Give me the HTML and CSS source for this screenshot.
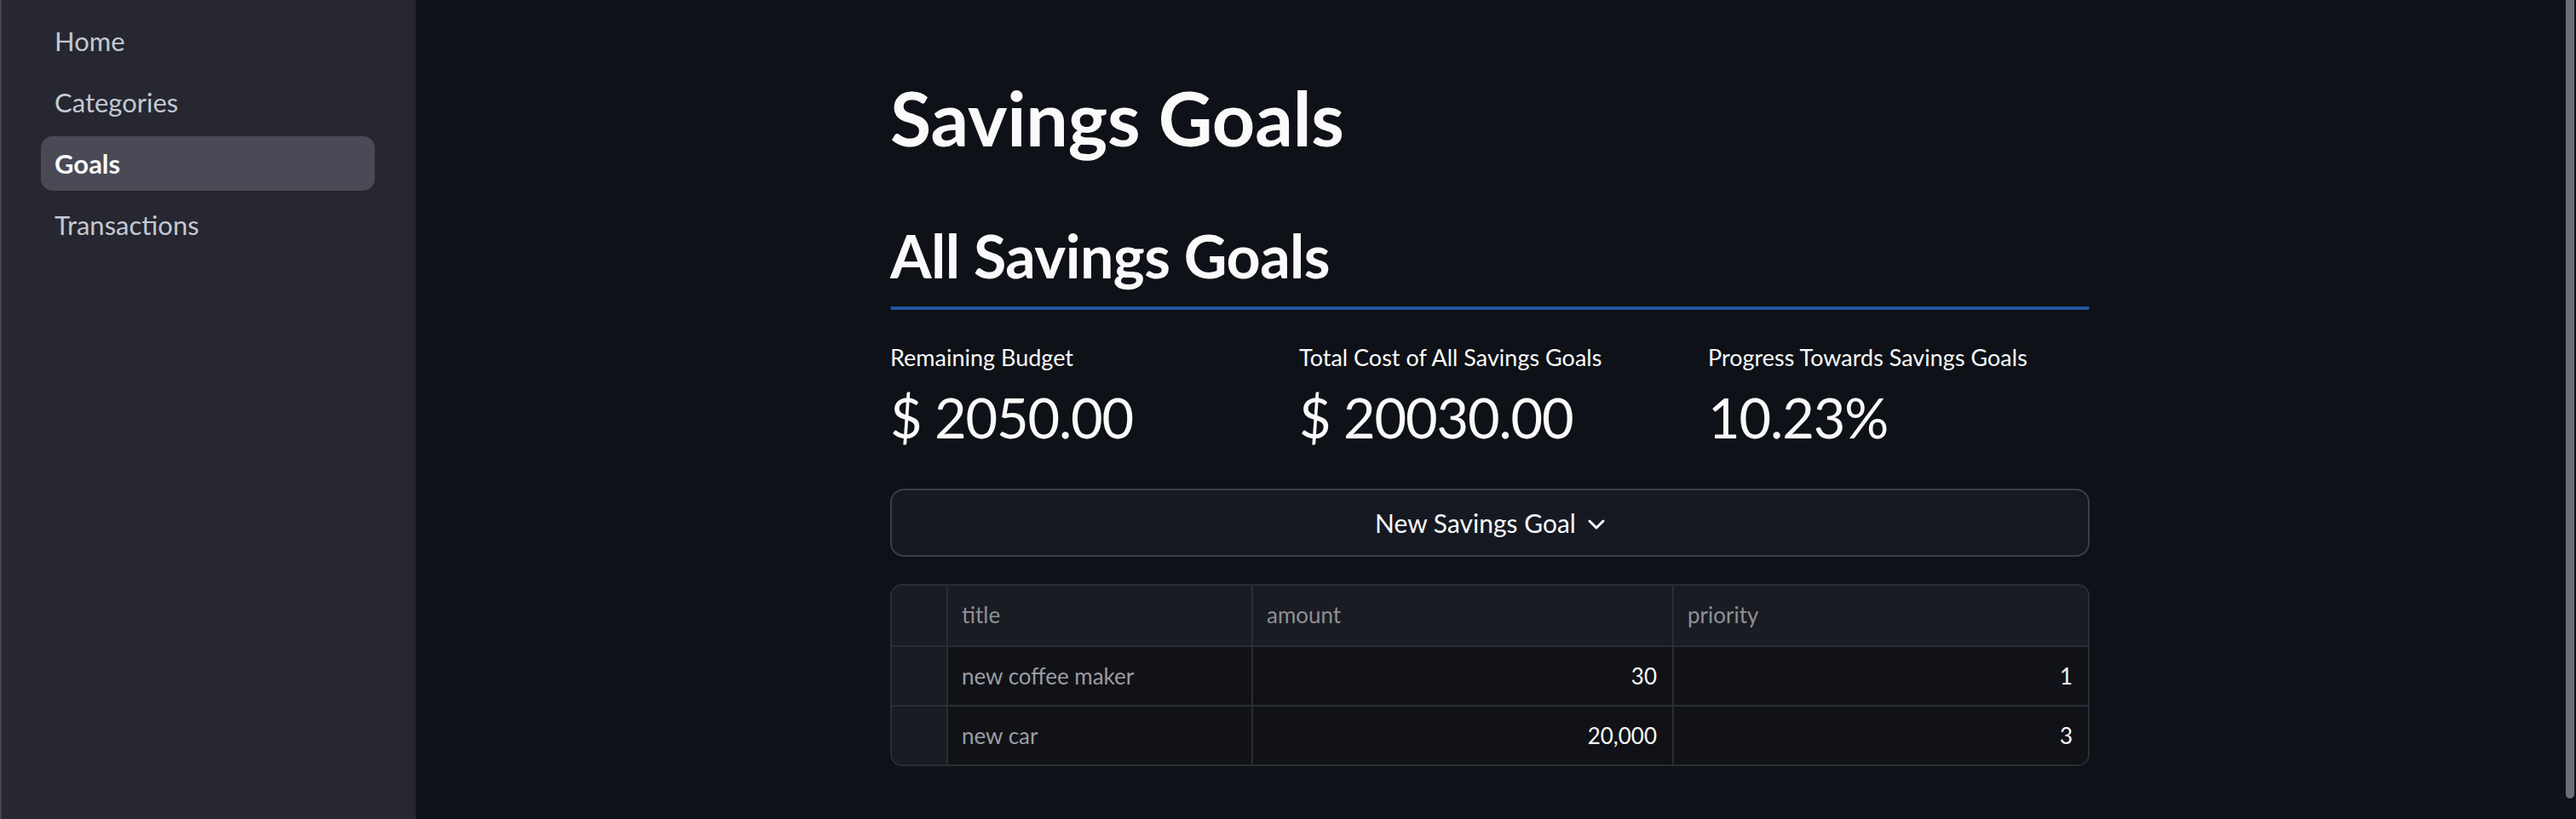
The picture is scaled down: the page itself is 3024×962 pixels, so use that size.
FILE: index.html
```html
<!DOCTYPE html>
<html lang="en">
<head>
<meta charset="utf-8">
<title>Savings Goals</title>
<link rel="stylesheet" href="styles.css">
</head>
<body>
<aside class="sidebar">
  <nav class="nav">
    <a class="nav-item">Home</a>
    <a class="nav-item">Categories</a>
    <a class="nav-item active">Goals</a>
    <a class="nav-item">Transactions</a>
  </nav>
</aside>
<main class="main">
  <div class="content">
    <h1 class="title">Savings Goals</h1>
    <h2 class="subtitle">All Savings Goals</h2>
    <div class="divider"></div>
    <div class="metrics">
      <div class="metric">
        <div class="metric-label">Remaining Budget</div>
        <div class="metric-value">$ 2050.00</div>
      </div>
      <div class="metric">
        <div class="metric-label">Total Cost of All Savings Goals</div>
        <div class="metric-value">$ 20030.00</div>
      </div>
      <div class="metric">
        <div class="metric-label">Progress Towards Savings Goals</div>
        <div class="metric-value">10.23%</div>
      </div>
    </div>
    <div class="expander">
      <span class="expander-label">New Savings Goal</span>
      <svg class="chevron" width="20" height="12" viewBox="0 0 20 12"><path d="M2 2 L10 10 L18 2" fill="none" stroke="#fafafa" stroke-width="3" stroke-linecap="round" stroke-linejoin="round"/></svg>
    </div>
    <div class="grid">
      <div class="cell head idx"></div>
      <div class="cell head">title</div>
      <div class="cell head">amount</div>
      <div class="cell head last">priority</div>

      <div class="cell idx"></div>
      <div class="cell text">new coffee maker</div>
      <div class="cell num">30</div>
      <div class="cell num last">1</div>

      <div class="cell idx bottom"></div>
      <div class="cell text bottom">new car</div>
      <div class="cell num bottom">20,000</div>
      <div class="cell num last bottom">3</div>
    </div>
  </div>
</main>
<div class="scrollbar"></div>
</body>
</html>
```

FILE: styles.css
```css
* { box-sizing: border-box; }

html, body {
  margin: 0;
  height: 962px;
  overflow: hidden;
}

body {
  display: flex;
  background: #0e1117;
  color: #fafafa;
  font-family: Lato, "Noto Sans", sans-serif;
}

.sidebar {
  width: 488px;
  flex: 0 0 488px;
  height: 962px;
  background: #262730;
  border-left: 2px solid #43444d;
  padding-top: 16px;
}

.nav {
  display: flex;
  flex-direction: column;
  gap: 8px;
  padding: 0 48px 0 46px;
}

.nav-item {
  display: flex;
  align-items: center;
  height: 64px;
  padding-left: 16px;
  border-radius: 14px;
  font-size: 31px;
  color: #c3c8d3;
}

.nav-item.active {
  background: #494a56;
  color: #fafafa;
  font-weight: 700;
}

.main {
  flex: 1;
  padding-right: 14px;
}

.content {
  width: 1408px;
  margin: 0 auto;
  padding-top: 86px;
}

.title {
  margin: 0;
  font-size: 88px;
  line-height: 1.2;
  font-weight: 700;
  letter-spacing: -0.2px;
}

.subtitle {
  margin: 66px 0 0;
  font-size: 70px;
  line-height: 1.2;
  font-weight: 700;
  letter-spacing: -0.6px;
}

.divider {
  margin-top: 18px;
  height: 4px;
  border-radius: 2px;
  background: #2356a2;
}

.metrics {
  margin-top: 40px;
  display: grid;
  grid-template-columns: repeat(3, 1fr);
  gap: 32px;
}

.metric-label {
  font-size: 27px;
  line-height: 1.2;
}

.metric-value {
  margin-top: 15px;
  font-size: 65px;
  line-height: 1.2;
  letter-spacing: -1.2px;
}

.expander {
  margin-top: 45px;
  height: 80px;
  border: 2px solid #3c3e48;
  border-radius: 16px;
  background: #161922;
  display: flex;
  align-items: center;
  justify-content: center;
  gap: 14px;
}

.expander-label {
  font-size: 30px;
}

.chevron { margin-top: 4px; }

.grid {
  margin-top: 32px;
  display: grid;
  grid-template-columns: 66px 358px 494px 1fr;
  border: 2px solid #2b2d35;
  border-radius: 14px;
  overflow: hidden;
}

.cell {
  height: 70px;
  display: flex;
  align-items: center;
  padding: 0 18px 0 16px;
  font-size: 26px;
  border-right: 2px solid #2b2d35;
  border-bottom: 2px solid #2b2d35;
  background: #111217;
}

.cell.head {
  height: 72px;
  background: #1a1c23;
  color: #8d9098;
  padding-bottom: 2px;
}

.cell.idx { background: #1a1c23; }

.cell.text { color: #9b9da4; }

.cell.num {
  justify-content: flex-end;
  color: #fafafa;
}

.cell.last { border-right: none; }
.cell.bottom { border-bottom: none; height: 68px; }

.scrollbar {
  position: fixed;
  top: 0;
  right: 2px;
  width: 10px;
  height: 938px;
  background: #6c6e75;
  border-radius: 0 0 5px 5px;
}
```
